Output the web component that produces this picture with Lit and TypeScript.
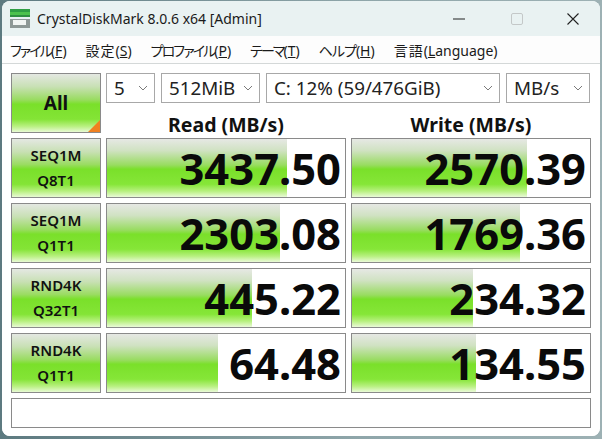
import { LitElement, html, css, svg } from "lit";
import { customElement } from "lit/decorators.js";

const rows = [
  { a: "SEQ1M", b: "Q8T1", r: "3437.50", rw: 180, w: "2570.39", ww: 175 },
  { a: "SEQ1M", b: "Q1T1", r: "2303.08", rw: 173, w: "1769.36", ww: 168 },
  { a: "RND4K", b: "Q32T1", r: "445.22", rw: 145, w: "234.32", ww: 121 },
  { a: "RND4K", b: "Q1T1", r: "64.48", rw: 111, w: "134.55", ww: 124 },
];

const chevron = svg`<svg class="chev" width="10" height="6" viewBox="0 0 10 6"><path d="M1 1l4 4 4-4" fill="none" stroke="#7a7a7a" stroke-width="1"/></svg>`;

@customElement("app-root")
export class AppRoot extends LitElement {
  static styles = css`
    :host { display: block; width: 602px; height: 439px; overflow: hidden; background: linear-gradient(90deg, #5d7a80, #8fa6aa 60%, #9db1b4); font-family: "Noto Sans", "Noto Sans CJK JP", sans-serif; }
    .win { margin: 1px 2px 0 2px; height: 435px; background: #fff; border-radius: 8px; overflow: hidden; display: flex; flex-direction: column; }
    .title { height: 35px; flex: none; background: #e9f2f2; display: flex; align-items: center; padding: 0 0 0 8px; gap: 7px; font-size: 14px; color: #1a1a1a; }
    .title .name { flex: 1; white-space: nowrap; }
    .wc { display: flex; align-items: center; }
    .wc span { width: 58px; display: flex; justify-content: center; }
    .wc span.close { width: 54px; }
    .menu { height: 28px; flex: none; background: #fdfdfd; border-bottom: 1px solid #d4d8d8; display: flex; align-items: center; padding-left: 8px; gap: 19px; font-size: 14px; color: #1a1a1a; box-sizing: border-box; white-space: nowrap; font-feature-settings: "palt"; }
    .menu u { text-underline-offset: 1px; }
    .k { letter-spacing: -1.9px; }
    .k1 { letter-spacing: -1px; }
    .z { letter-spacing: 1px; }
    .body { flex: 1; padding: 9px 8px 0 9px; background: #fff; display: grid; grid-template-columns: 90px 240px 240px; column-gap: 5px; grid-template-rows: 30px 25px 60px 60px 60px 60px 30px; row-gap: 5px; }
    .all { grid-row: 1 / span 2; box-sizing: border-box; height: 60px; position: relative; display: flex; align-items: center; justify-content: center; font-size: 19px; font-weight: 700; color: #111; border: 1px solid #8a8a8a; }
    .green { background: linear-gradient(180deg, #e4e8e2 0%, #c8e0b4 22%, #9adc62 44%, #7ae02a 52%, #84e436 78%, #b8f080 90%, #e8fad4 100%); }
    .corner { position: absolute; right: 0; bottom: 0; width: 0; height: 0; border-style: solid; border-width: 0 0 12px 12px; border-color: transparent transparent #f08020 transparent; }
    .selects { grid-column: 2 / span 2; display: flex; gap: 6px; height: 30px; }
    .sel { box-sizing: border-box; height: 30px; border: 1px solid #a8a8a8; background: #fff; display: flex; align-items: center; justify-content: space-between; padding: 0 6px 0 7px; font-size: 18.8px; color: #222; white-space: nowrap; }
    .s1 { width: 49px; }
    .s2 { width: 99px; }
    .s3 { width: 234px; }
    .s4 { width: 84px; }
    .head { text-align: center; font-size: 19.5px; font-weight: 700; color: #111; line-height: 30px; height: 25px; margin-top: 2px; }
    .label { box-sizing: border-box; height: 60px; border: 1px solid #8a8a8a; display: flex; flex-direction: column; align-items: center; justify-content: center; font-size: 15px; font-weight: 600; color: #111; line-height: 25px; }
    .cell { box-sizing: border-box; height: 60px; border: 1px solid #8a8a8a; position: relative; background: #fff; display: flex; align-items: center; justify-content: flex-end; }
    .bar { position: absolute; left: 0; top: 0; bottom: 0; background: linear-gradient(180deg, #e6e8e4 0%, #d0e2c2 20%, #98dc60 45%, #7ae02a 52%, #86e638 78%, #b8f080 90%, #eafad8 100%); }
    .num { position: relative; font-size: 43.5px; font-weight: 700; color: #0a0a0a; line-height: 58px; padding-right: 4px; }
    .msg { grid-column: 1 / -1; box-sizing: border-box; height: 30px; border: 1px solid #8a8a8a; }
  `;

  render() {
    return html`<div class="win">
      <div class="title">
        <svg width="20" height="20" viewBox="0 0 20 20"><rect x="0" y="0" width="20" height="3" fill="#2f9e44"/><rect x="0" y="3" width="20" height="3" fill="#4cc24c"/><rect x="0" y="6" width="20" height="2" fill="#2f8f40"/><rect x="0" y="10" width="20" height="9" fill="#8e9896"/><rect x="3" y="11" width="13" height="5" fill="#f2f5f3"/></svg>
        <span class="name">CrystalDiskMark 8.0.6 x64 [Admin]</span>
        <div class="wc">
          <span><svg width="12" height="12" viewBox="0 0 12 12"><path d="M0 6h12" stroke="#222" stroke-width="1.2"/></svg></span>
          <span><svg width="12" height="12" viewBox="0 0 12 12"><rect x=".5" y=".5" width="11" height="11" rx="1.5" fill="none" stroke="#c4c8c8"/></svg></span>
          <span class="close"><svg width="12" height="12" viewBox="0 0 12 12"><path d="M.5.5l11 11M11.5.5l-11 11" stroke="#222" stroke-width="1.1"/></svg></span>
        </div>
      </div>
      <div class="menu">
        <span><span class="k">ファイル</span>(<u>F</u>)</span><span><span class="z">設定</span>(<u>S</u>)</span><span><span class="k">プロファイル</span>(<u>P</u>)</span><span><span class="k">テーマ</span>(<u>T</u>)</span><span><span class="k1">ヘルプ</span>(<u>H</u>)</span><span><span class="z">言語</span>(<u>L</u>anguage)</span>
      </div>
      <div class="body">
        <div class="all green">All<i class="corner"></i></div>
        <div class="selects">
          <div class="sel s1">5 ${chevron}</div>
          <div class="sel s2">512MiB ${chevron}</div>
          <div class="sel s3">C: 12% (59/476GiB) ${chevron}</div>
          <div class="sel s4">MB/s ${chevron}</div>
        </div>
        <div class="head">Read (MB/s)</div>
        <div class="head">Write (MB/s)</div>
        ${rows.map(
          (r) => html`
            <div class="label green"><span>${r.a}</span><span>${r.b}</span></div>
            <div class="cell"><div class="bar" style="width:${r.rw}px"></div><span class="num">${r.r}</span></div>
            <div class="cell"><div class="bar" style="width:${r.ww}px"></div><span class="num">${r.w}</span></div>
          `
        )}
        <div class="msg"></div>
      </div>
    </div>`;
  }
}
